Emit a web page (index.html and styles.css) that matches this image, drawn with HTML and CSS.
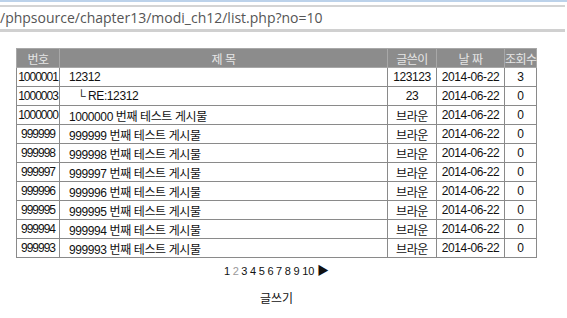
FILE: index.html
```html
<!DOCTYPE html>
<html lang="ko">
<head>
<meta charset="UTF-8" />
<title>게시판 목록</title>
<link rel="stylesheet" href="styles.css">
</head>
<body>
  <div class="addr">
    <div class="addr-field">/phpsource/chapter13/modi_ch12/list.php?no=10</div>
  </div>

  <div class="board">
    <table class="list">
      <tr>
        <th class="c-no">번호</th>
        <th class="c-title">제 목</th>
        <th class="c-name">글쓴이</th>
        <th class="c-date">날 짜</th>
        <th class="c-hit">조회수</th>
      </tr>
      <tr><td class="num">1000001</td><td class="subj">12312</td><td>123123</td><td>2014-06-22</td><td>3</td></tr>
      <tr><td class="num">1000003</td><td class="subj"><span class="re">└ RE:12312</span></td><td>23</td><td>2014-06-22</td><td>0</td></tr>
      <tr><td class="num">1000000</td><td class="subj">1000000 번째 테스트 게시물</td><td>브라운</td><td>2014-06-22</td><td>0</td></tr>
      <tr><td class="num">999999</td><td class="subj">999999 번째 테스트 게시물</td><td>브라운</td><td>2014-06-22</td><td>0</td></tr>
      <tr><td class="num">999998</td><td class="subj">999998 번째 테스트 게시물</td><td>브라운</td><td>2014-06-22</td><td>0</td></tr>
      <tr><td class="num">999997</td><td class="subj">999997 번째 테스트 게시물</td><td>브라운</td><td>2014-06-22</td><td>0</td></tr>
      <tr><td class="num">999996</td><td class="subj">999996 번째 테스트 게시물</td><td>브라운</td><td>2014-06-22</td><td>0</td></tr>
      <tr><td class="num">999995</td><td class="subj">999995 번째 테스트 게시물</td><td>브라운</td><td>2014-06-22</td><td>0</td></tr>
      <tr><td class="num">999994</td><td class="subj">999994 번째 테스트 게시물</td><td>브라운</td><td>2014-06-22</td><td>0</td></tr>
      <tr><td class="num">999993</td><td class="subj">999993 번째 테스트 게시물</td><td>브라운</td><td>2014-06-22</td><td>0</td></tr>
    </table>

    <div class="paging">
      <a>1</a> <span class="cur">2</span> <a>3</a> <a>4</a> <a>5</a> <a>6</a> <a>7</a> <a>8</a> <a>9</a> <a>10</a> <a class="next">▶</a>
    </div>
    <div class="write"><a>글쓰기</a></div>
  </div>
</body>
</html>
```

FILE: styles.css
```css
body {
  margin: 0;
  background: #fff;
  font-family: "Liberation Sans", "Noto Sans CJK KR", sans-serif;
  font-size: 12px;
  color: #111;
}
.addr {
  border-top: 2px solid #bcd2ea;
  padding-top: 3px;
  padding-right: 2px;
}
.addr-field {
  border-top: 2px solid #d4d4d4;
  border-bottom: 3px solid #d0d0d0;
  height: 22px;
  line-height: 21px;
  font-family: "Open Sans", "Noto Sans", sans-serif;
  font-size: 14px;
  color: #555;
  white-space: nowrap;
  overflow: hidden;
}
.board {
  width: 521px;
  margin: 16px 0 0 16px;
}
.list {
  width: 521px;
  border-collapse: collapse;
  border: 1px solid #8a8a8a;
  table-layout: fixed;
}
.list th {
  background: #8c8c8c;
  color: #e6e6e6;
  font-weight: normal;
  height: 18px;
  padding: 0;
  border: 1px solid #a8a8a8;
  white-space: nowrap;
  letter-spacing: -0.5px;
}
.list td {
  height: 18px;
  padding: 0;
  text-align: center;
  border: 1px solid #8a8a8a;
  white-space: nowrap;
  letter-spacing: -0.4px;
  overflow: hidden;
}
.list td.num {
  letter-spacing: -1px;
}
.list td.subj {
  text-align: left;
  padding-left: 9px;
}
.re {
  padding-left: 8px;
}
.c-no { width: 42px; }
.c-name { width: 48px; }
.c-date { width: 67px; }
.c-hit { width: 31px; }
.paging {
  text-align: center;
  margin-top: 3px;
  font-size: 11px;
  word-spacing: -0.5px;
}
.paging .cur {
  color: #999;
}
.paging .next {
  font-size: 12px;
}
.write {
  text-align: center;
  margin-top: 11px;
}
```
